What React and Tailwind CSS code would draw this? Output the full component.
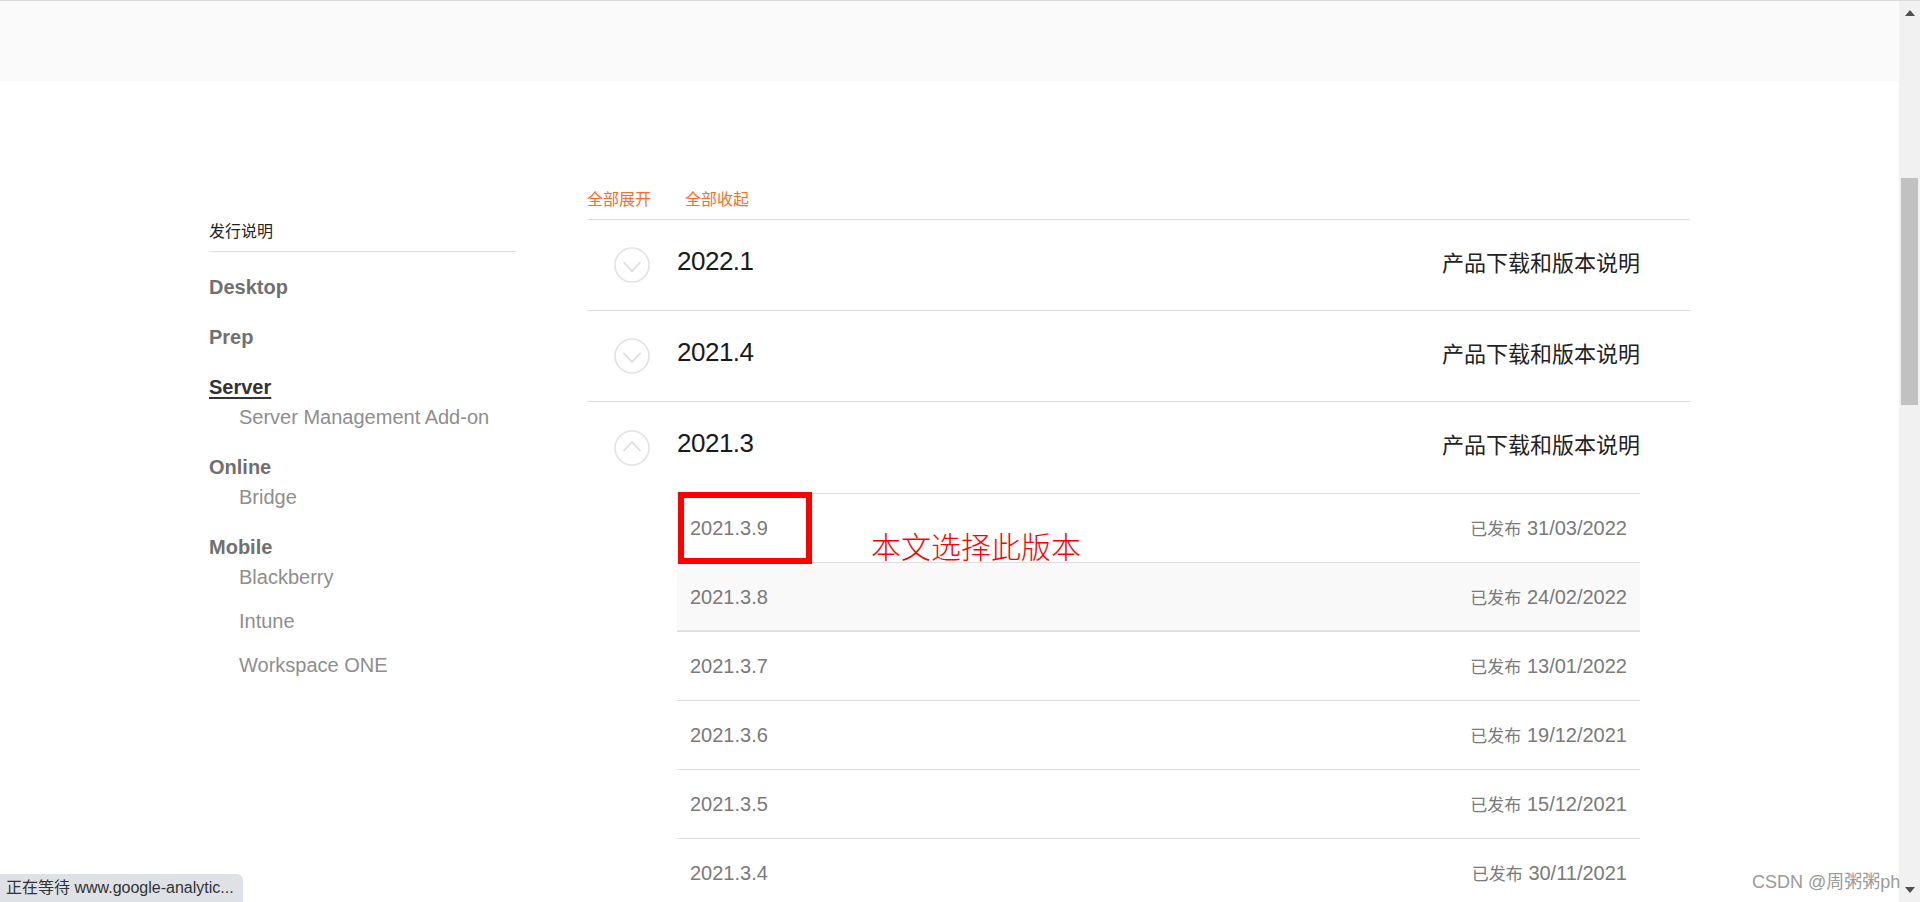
import React from 'react';

const FONT = { fontFamily: '"Liberation Sans", "Noto Sans CJK SC", sans-serif' };

const nav = [
  { title: 'Desktop', items: [] },
  { title: 'Prep', items: [] },
  { title: 'Server', active: true, items: ['Server Management Add-on'] },
  { title: 'Online', items: ['Bridge'] },
  { title: 'Mobile', items: ['Blackberry', 'Intune', 'Workspace ONE'] },
];

const releases = [
  { version: '2022.1', open: false },
  { version: '2021.4', open: false },
  { version: '2021.3', open: true },
];

const builds = [
  { version: '2021.3.9', date: '31/03/2022' },
  { version: '2021.3.8', date: '24/02/2022', hover: true },
  { version: '2021.3.7', date: '13/01/2022' },
  { version: '2021.3.6', date: '19/12/2021' },
  { version: '2021.3.5', date: '15/12/2021' },
  { version: '2021.3.4', date: '30/11/2021' },
];

function Toggle({ up }) {
  return (
    <svg width="36" height="36" viewBox="0 0 36 36" className="shrink-0">
      <circle cx="18" cy="18" r="17" fill="none" stroke="#e2e2e2" strokeWidth="1.6" />
      {up ? (
        <polyline points="9.5,21 18,12 26.5,21" fill="none" stroke="#dcdcdc" strokeWidth="1.6" />
      ) : (
        <polyline points="9.5,15 18,24 26.5,15" fill="none" stroke="#dcdcdc" strokeWidth="1.6" />
      )}
    </svg>
  );
}

function Sidebar() {
  return (
    <div className="w-[307px] shrink-0 pt-[32px]">
      <div className="border-b border-[#dedede] pb-[7px] text-[16px] leading-[24px] text-[#222]">发行说明</div>
      <div className="mt-[20px]">
        {nav.map((group) => (
          <div key={group.title} className="mb-[20px]">
            <div
              className={`text-[20px] font-bold leading-[30px] ${
                group.active ? 'text-[#333] underline underline-offset-[3px] decoration-[2px]' : 'text-[#707070]'
              }`}
            >
              {group.title}
            </div>
            <div className="flex flex-col gap-[14px]">
              {group.items.map((item) => (
                <div key={item} className="pl-[30px] text-[20px] leading-[30px] text-[#8e8e8e]">
                  {item}
                </div>
              ))}
            </div>
          </div>
        ))}
      </div>
    </div>
  );
}

function BuildList() {
  return (
    <div className="relative ml-[90px] mr-[50px]">
      {builds.map((b) => (
        <div
          key={b.version}
          className={`flex h-[69px] items-center justify-between border-t border-[#dedede] px-[13px] ${
            b.hover ? 'bg-[#f9f9f9] shadow-[inset_0_-1px_0_#e2e2e2]' : ''
          }`}
        >
          <span className="text-[20px] text-[#7a7a7a]">{b.version}</span>
          <span className="text-[20px] text-[#7a7a7a]">
            <span className="text-[17px]">已发布</span> {b.date}
          </span>
        </div>
      ))}

      {/* annotation from the screenshot */}
      <div className="absolute left-[1px] top-[-1px] h-[72px] w-[134px] border-[6px] border-[#ff0000]" />
      <div className="absolute left-[194px] top-[37px] text-[30px] font-light leading-[36px] text-[#ff0000]">
        本文选择此版本
      </div>
    </div>
  );
}

function Releases() {
  return (
    <div className="ml-[71px] w-[1103px]">
      <div className="flex h-[31px] gap-[34px] text-[16px] leading-[24px] text-[#fb6c1e]">
        <span>全部展开</span>
        <span>全部收起</span>
      </div>
      {releases.map((r) => (
        <div key={r.version} className="border-t border-[#dedede]">
          <div className={`flex items-center pl-[27px] pr-[50px] ${r.open ? 'h-[91px]' : 'h-[90px]'}`}>
            <Toggle up={r.open} />
            <span className="ml-[27px] pb-[8px] text-[26px] tracking-[-0.5px] text-[#1a1a1a]">{r.version}</span>
            <span className="ml-auto pb-[4px] text-[22px] text-[#222]">产品下载和版本说明</span>
          </div>
          {r.open && <BuildList />}
        </div>
      ))}
    </div>
  );
}

export default function App() {
  return (
    <div className="relative box-border flex h-[902px] w-full overflow-hidden border-t border-[#dadada] bg-white" style={FONT}>
      <div className="flex min-w-0 flex-1 flex-col">
        <div className="h-[80px] shrink-0 bg-[#fafafa]" />
        <div className="mx-auto flex w-[1481px] pt-[107px]">
          <Sidebar />
          <Releases />
        </div>
      </div>

      {/* scrollbar */}
      <div className="flex w-[21px] shrink-0 flex-col items-center bg-[#f1f1f1]">
        <svg width="10" height="6" viewBox="0 0 10 6" className="mt-[9px]">
          <polygon points="0,6 5,0 10,6" fill="#505050" />
        </svg>
        <div className="mt-[162px] h-[227px] w-[17px] bg-[#c1c1c1]" />
        <svg width="10" height="6" viewBox="0 0 10 6" className="mt-auto mb-[9px]">
          <polygon points="0,0 10,0 5,6" fill="#505050" />
        </svg>
      </div>

      {/* browser status bubble */}
      <div className="absolute bottom-0 left-0 h-[28px] w-[243px] rounded-tr-[6px] bg-[#dee1e6] pl-[6px] text-[16px] leading-[28px] text-[#333]">
        正在等待 www.google-analytic...
      </div>

      {/* watermark */}
      <div className="absolute left-[1752px] top-[869px] whitespace-nowrap text-[18px] leading-[24px] text-[#9a9a9a]">
        CSDN @周粥粥ph
      </div>
    </div>
  );
}
